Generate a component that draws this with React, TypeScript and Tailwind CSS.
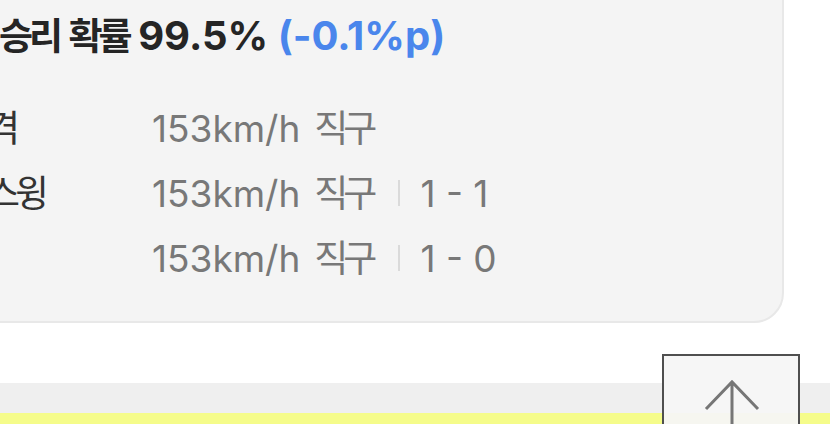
import React from 'react';

interface PitchRow {
  label: string;
  speed: string;
  pitch: string;
  count?: string;
}

const rows: PitchRow[] = [
  { label: '타격', speed: '153km/h', pitch: '직구' },
  { label: '헛스윙', speed: '153km/h', pitch: '직구', count: '1 - 1' },
  { label: '볼', speed: '153km/h', pitch: '직구', count: '1 - 0' },
];

// 한글은 폭을 조금 좁혀서 표시
const Ko: React.FC<{ children: React.ReactNode; className?: string }> = ({ children, className = 'tracking-[-5px]' }) => (
  <span className={`font-['Noto_Sans_CJK_KR',sans-serif] ${className}`}>{children}</span>
);

export default function App() {
  return (
    <div className="relative w-[830px] h-[424px] overflow-hidden bg-white font-['Inter','Noto_Sans_CJK_KR',sans-serif]">
      {/* 승리 확률 카드 */}
      <div className="ml-[-60px] mt-[-40px] w-[844px] rounded-[30px] border-2 border-[#e8e8e8] bg-[#f4f4f4] pt-[42px] pb-[31px] pl-[15px]">
        <h2 className="ml-[42px] text-[40px] font-bold leading-[60px] text-[#252525]">
          <Ko className="text-[37px] tracking-[-4px]">승리</Ko> <Ko className="text-[37px] tracking-[-4px]">확률</Ko> 99.5%{' '}
          <span className="text-[#4a86ec]">(-0.1%p)</span>
        </h2>

        <div className="mt-[29px] flex flex-col">
          {rows.map((row, i) => (
            <div key={i} className="flex items-baseline text-[37px] leading-[63px]">
              <div className="w-[195px] shrink-0 text-[#333]">
                <Ko>{row.label}</Ko>
              </div>
              <div className="flex items-baseline text-[#787878]">
                <span>{row.speed}</span>
                <span className="ml-[14px]">
                  <Ko>{row.pitch}</Ko>
                </span>
                {row.count && (
                  <>
                    <span className="ml-[26px] mr-[20px] inline-block h-[26px] w-[2px] self-center bg-[#dadada]" />
                    <span>{row.count}</span>
                  </>
                )}
              </div>
            </div>
          ))}
        </div>
      </div>

      {/* 하단 영역 */}
      <div className="mt-[60px] h-[30px] bg-[#efefef]" />
      <div className="h-[40px] bg-[#f5fc8a]" />

      {/* 맨 위로 버튼 */}
      <button className="absolute left-[662px] top-[354px] h-[110px] w-[138px] border-2 border-[#4f4f4f] bg-[#f5f5f5]/95">
        <svg className="absolute left-0 top-0" width="134" height="106" viewBox="0 0 134 106">
          <path d="M42 53 L68 26 L94 53 M68 26 L68 106" fill="none" stroke="#767676" strokeWidth="3" />
        </svg>
      </button>
    </div>
  );
}
